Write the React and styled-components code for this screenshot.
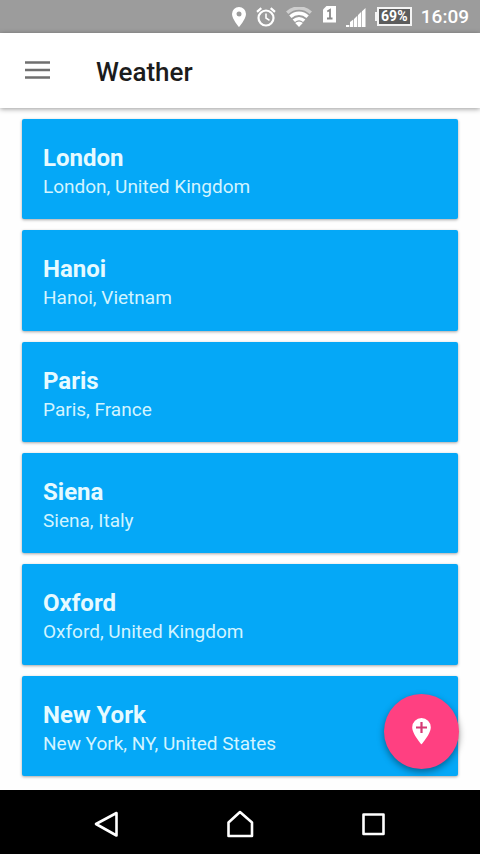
import styled, { createGlobalStyle } from 'styled-components';

const GlobalStyle = createGlobalStyle`
  * {
    box-sizing: border-box;
  }

  body {
    margin: 0;
    font-family: Roboto, 'Liberation Sans', sans-serif;
    background-color: #fefefe;
  }

  svg {
    display: block;
  }
`;

const IconButton = styled.button`
  padding: 0;
  border: none;
  background-color: transparent;
  display: flex;
  align-items: center;
  justify-content: center;
  cursor: pointer;
`;

const PageContainer = styled.div`
  min-height: 100vh;
  display: flex;
  flex-direction: column;
`;

const StatusBar = styled.div`
  height: 33px;
  padding-right: 11px;
  display: flex;
  align-items: center;
  justify-content: flex-end;
  gap: 9px;
  background-color: #9c9c9c;
  color: #ffffff;
`;

const Signals = styled.div`
  display: flex;
  align-items: center;
  gap: 10px;
`;

const Battery = styled.div`
  display: flex;
  align-items: center;

  &::before {
    content: '';
    width: 2px;
    height: 9px;
    background-color: #f4f4f4;
  }
`;

const BatteryLevel = styled.span`
  width: 35px;
  height: 19px;
  border: 2px solid #f4f4f4;
  background-color: #5c5c5c;
  font-size: 14px;
  font-weight: 700;
  line-height: 15px;
  text-align: center;
`;

const Clock = styled.time`
  font-size: 19px;
  font-weight: 500;
  line-height: 24px;
`;

const AppBar = styled.header`
  height: 75px;
  padding: 0 24px;
  display: flex;
  align-items: center;
  gap: 46px;
  background-color: #ffffff;
  box-shadow: 0 1px 5px rgba(0, 0, 0, 0.4);
  z-index: 1;
`;

const MenuButton = styled(IconButton)`
  width: 26px;
  height: 26px;
  color: #707070;
`;

const Title = styled.h1`
  margin: 0;
  padding-top: 2px;
  font-size: 26px;
  font-weight: 500;
  line-height: 32px;
  color: #1c1c1c;
`;

const Content = styled.main`
  position: relative;
  flex: 1;
  display: flex;
`;

const CityList = styled.ul`
  flex: 1;
  margin: 0;
  padding: 11px 22px 14px;
  display: grid;
  grid-auto-rows: 1fr;
  gap: 11px;
  list-style: none;
`;

const CityCard = styled.li`
  padding: 24px 21px 18px;
  border-radius: 2px;
  background-color: #05a8f7;
  box-shadow: 0 1px 3px rgba(0, 0, 0, 0.35);
  color: #e6faff;

  h2 {
    margin: 0;
    font-size: 24px;
    font-weight: 700;
    line-height: 30px;
  }

  p {
    margin: 0;
    font-size: 19px;
    line-height: 28px;
    color: #d2f4ff;
  }
`;

const AddButton = styled(IconButton)`
  position: absolute;
  right: 21px;
  bottom: 21px;
  width: 75px;
  height: 75px;
  border-radius: 50%;
  background-color: #ff4081;
  box-shadow: 0 3px 7px rgba(0, 0, 0, 0.4);
`;

const NavigationBar = styled.nav`
  height: 64px;
  padding: 4px 40px 0;
  display: grid;
  grid-template-columns: repeat(3, 1fr);
  background-color: #000000;
`;

const cities = [
  { name: 'London', place: 'London, United Kingdom' },
  { name: 'Hanoi', place: 'Hanoi, Vietnam' },
  { name: 'Paris', place: 'Paris, France' },
  { name: 'Siena', place: 'Siena, Italy' },
  { name: 'Oxford', place: 'Oxford, United Kingdom' },
  { name: 'New York', place: 'New York, NY, United States' },
];

const navItems = [
  { label: 'Back', path: 'M4 15 24.5 4v22.5z' },
  { label: 'Home', path: 'M3.5 13.5 15 3l12 10.500V27H3.5z' },
  { label: 'Recent apps', path: 'M5.5 5.5h20v19.5h-20z' },
];

function LocationIcon() {
  return (
    <svg width="14" height="20" viewBox="0 0 14 20" aria-hidden="true">
      <path
        fill="#fff"
        fillRule="evenodd"
        d="M7 0a7 7 0 0 0-7 7c0 5 7 13 7 13s7-8 7-13a7 7 0 0 0-7-7zm0 4.5a2.5 2.5 0 1 1 0 5 2.5 2.5 0 0 1 0-5z"
      />
    </svg>
  );
}

function AlarmIcon() {
  return (
    <svg width="20" height="20" viewBox="0 0 20 20" fill="none" stroke="#fff" aria-hidden="true">
      <circle cx="10" cy="11" r="7.5" strokeWidth="2.2" />
      <path strokeWidth="2.2" d="M1 4.8 5.3 1.2M19 4.8l-4.3-3.6" />
      <path strokeWidth="1.6" d="M10 6.5V11l3.5 2.3" />
    </svg>
  );
}

function WifiIcon() {
  return (
    <svg width="26" height="20" viewBox="0 0 26 20" fill="none" stroke="#fff" aria-hidden="true">
      <path strokeWidth="3.4" opacity="0.5" d="M1.2 5.8a17 17 0 0 1 23.6 0" />
      <path strokeWidth="3.4" d="M4.4 9.7a12.5 12.5 0 0 1 17.2 0M7.8 13.7a7.5 7.5 0 0 1 10.4 0" />
      <path fill="#fff" stroke="none" d="m13 20-3.8-4a5.5 5.5 0 0 1 7.6 0z" />
    </svg>
  );
}

function SimIcon() {
  return (
    <svg width="14" height="22" viewBox="0 0 14 22" aria-hidden="true">
      <path fill="#fff" d="M4.5 0H14v16.500H1V3.500z" />
      <path fill="none" stroke="#888" strokeWidth="1.8" d="M5.3 5.5 8 3.8v8M5 12.5h5.5" />
    </svg>
  );
}

function SignalIcon() {
  return (
    <svg width="20" height="20" viewBox="0 0 20 20" fill="#fff" aria-hidden="true">
      <path d="M0 18h3.300v2H0zM4 15l3.300-2.500V20H4zM8 12l3.300-3.300V20H8zM12 8l3.300-3.300V20H12zM16 4.200 19.500 1v19H16z" />
    </svg>
  );
}

function App() {
  return (
    <PageContainer>
      <GlobalStyle />

      <StatusBar>
        <Signals>
          <LocationIcon />
          <AlarmIcon />
          <WifiIcon />
          <SimIcon />
          <SignalIcon />
        </Signals>
        <Battery>
          <BatteryLevel>69%</BatteryLevel>
        </Battery>
        <Clock>16:09</Clock>
      </StatusBar>

      <AppBar>
        <MenuButton type="button" aria-label="Open menu">
          <svg width="26" height="26" viewBox="0 0 26 26" stroke="currentColor" strokeWidth="2.6">
            <path d="M1 4.5h25M1 12h25M1 19.5h25" />
          </svg>
        </MenuButton>
        <Title>Weather</Title>
      </AppBar>

      <Content>
        <CityList>
          {cities.map(city => (
            <CityCard key={city.name}>
              <h2>{city.name}</h2>
              <p>{city.place}</p>
            </CityCard>
          ))}
        </CityList>

        <AddButton type="button" aria-label="Add location">
          <svg width="20" height="28" viewBox="0 0 20 28">
            <path fill="#fff" d="M9.500 0A9.300 9.300 0 0 0 .2 9.300C.2 16 9.500 26.500 9.500 26.500S18.800 16 18.800 9.300A9.300 9.300 0 0 0 9.500 0z" />
            <path stroke="#d63a75" strokeWidth="2.2" d="M9.500 4v11M4 9.500h11" />
          </svg>
        </AddButton>
      </Content>

      <NavigationBar>
        {navItems.map(item => (
          <IconButton key={item.label} type="button" aria-label={item.label}>
            <svg width="30" height="30" viewBox="0 0 30 30">
              <path fill="none" stroke="#fff" strokeWidth="2.6" strokeLinejoin="round" d={item.path} />
            </svg>
          </IconButton>
        ))}
      </NavigationBar>
    </PageContainer>
  );
}

export default App;
